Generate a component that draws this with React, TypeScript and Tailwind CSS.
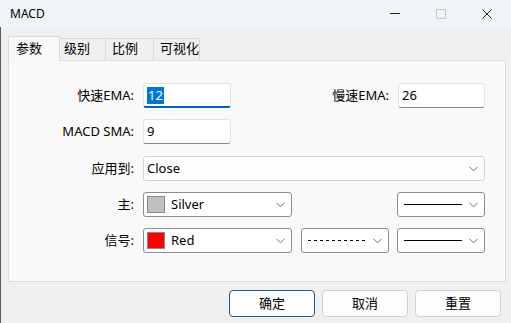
import React from "react";

const font = {
  fontFamily: '"Noto Sans", "Noto Sans CJK SC", sans-serif',
};

function Chevron() {
  return (
    <svg width="9" height="6" viewBox="0 0 9 6" className="shrink-0">
      <path d="M0.5 0.8 L4.5 4.8 L8.5 0.8" fill="none" stroke="#5f5f5f" strokeWidth="0.9" />
    </svg>
  );
}

function TextBox({ value, w, focused }: { value: string; w: string; focused?: boolean }) {
  return (
    <div
      className={`${w} h-[25px] bg-white rounded-[3px] border border-[#e3e3e3] flex items-center pl-[3px] ${
        focused ? "border-b-2 border-b-[#005fb8]" : "border-b-[#8a8a8a]"
      }`}
    >
      {focused ? (
        <span className="bg-[#0078d7] text-white leading-[17px] px-[1px]">{value}</span>
      ) : (
        <span>{value}</span>
      )}
    </div>
  );
}

function Combo({ w, children, light }: { w: string; children: React.ReactNode; light?: boolean }) {
  return (
    <div
      className={`${w} h-[25px] rounded-[3px] border flex items-center pl-[3px] pr-[6px] ${
        light ? "bg-[#fdfdfd] border-[#d3d3d3]" : "bg-white border-[#8e8e8e]"
      }`}
    >
      <div className="flex-1 flex items-center min-w-0">{children}</div>
      <Chevron />
    </div>
  );
}

function ColorCombo({ color, name }: { color: string; name: string }) {
  return (
    <Combo w="w-[149px]">
      <div className="w-[18px] h-[17px] border border-[#8a8a8a] mr-[6px]" style={{ background: color }} />
      <span>{name}</span>
    </Combo>
  );
}

function LineCombo({ dashed }: { dashed?: boolean }) {
  return (
    <Combo w="w-[88px]">
      <svg width="60" height="3" viewBox="0 0 60 3" className="ml-[3px]">
        <line
          x1="0"
          y1="1.5"
          x2="58"
          y2="1.5"
          stroke="#000"
          strokeWidth="1"
          strokeDasharray={dashed ? "3 3" : undefined}
        />
      </svg>
    </Combo>
  );
}

function Label({ children }: { children: React.ReactNode }) {
  return <div className="w-[126px] text-right pr-[1px]">{children}</div>;
}

export default function App() {
  return (
    <div className="w-[511px] h-[323px] bg-[#f0f0f0] text-[13px] text-black overflow-hidden flex flex-col" style={font}>
      <div className="h-[27px] bg-[#eff4f9] flex items-center pl-[10px] shrink-0">
        <span className="text-[12px] flex-1">MACD</span>
        <div className="flex items-center h-full">
          <div className="w-[46px] flex justify-center">
            <div className="w-[10px] border-t border-t-[#222]" />
          </div>
          <div className="w-[46px] flex justify-center">
            <div className="w-[10px] h-[10px] border border-[#c4c4c4] rounded-[1px]" />
          </div>
          <div className="w-[46px] flex justify-center mr-[1px]">
            <svg width="10" height="10" viewBox="0 0 10 10">
              <path d="M0.5 0.5 L9.5 9.5 M9.5 0.5 L0.5 9.5" stroke="#222" strokeWidth="1" />
            </svg>
          </div>
        </div>
      </div>

      <div className="flex-1 border-l border-l-[#5c5c5c] flex flex-col">
        <div className="flex items-end h-[33px] pl-[7px]">
          <div className="w-[52px] h-[25px] bg-[#f9f9f9] border border-[#d9d9d9] border-b-0 pl-[7px] pt-[2px] relative z-10 -mb-[1px]">
            参数
          </div>
          <div className="w-[46px] h-[22px] border border-[#d9d9d9] border-l-0 border-b-0 pl-[4px]">级别</div>
          <div className="w-[48px] h-[22px] border border-[#d9d9d9] border-l-0 border-b-0 pl-[6px]">比例</div>
          <div className="w-[46px] h-[22px] border border-[#d9d9d9] border-l-0 border-b-0 pl-[6px]">可视化</div>
        </div>

        <div className="ml-[7px] w-[498px] h-[222px] bg-[#f9f9f9] border border-[#dcdcdc] pt-[22px] pr-[20px] flex flex-col gap-[11px]">
          <div className="flex items-center gap-[8px]">
            <Label>快速EMA:</Label>
            <TextBox value="12" w="w-[88px]" focused />
            <div className="flex-1 text-right pr-[1px]">慢速EMA:</div>
            <TextBox value="26" w="w-[87px]" />
          </div>
          <div className="flex items-center gap-[8px]">
            <Label>MACD SMA:</Label>
            <TextBox value="9" w="w-[88px]" />
          </div>
          <div className="flex items-center gap-[8px] mt-[1px]">
            <Label>应用到:</Label>
            <Combo w="flex-1" light>
              <span>Close</span>
            </Combo>
          </div>
          <div className="flex items-center gap-[8px]">
            <Label>主:</Label>
            <ColorCombo color="#c0c0c0" name="Silver" />
            <div className="ml-auto">
              <LineCombo />
            </div>
          </div>
          <div className="flex items-center gap-[8px]">
            <Label>信号:</Label>
            <ColorCombo color="#ff0000" name="Red" />
            <div className="ml-auto flex gap-[8px]">
              <LineCombo dashed />
              <LineCombo />
            </div>
          </div>
        </div>

        <div className="flex justify-end gap-[7px] pr-[10px] mt-[8px]">
          <button className="w-[86px] h-[27px] bg-[#fdfdfd] rounded-[4px] border border-[#1f5a8c]">确定</button>
          <button className="w-[86px] h-[27px] bg-[#fdfdfd] rounded-[4px] border border-[#d0d0d0]">取消</button>
          <button className="w-[86px] h-[27px] bg-[#fdfdfd] rounded-[4px] border border-[#d0d0d0]">重置</button>
        </div>
      </div>
    </div>
  );
}
